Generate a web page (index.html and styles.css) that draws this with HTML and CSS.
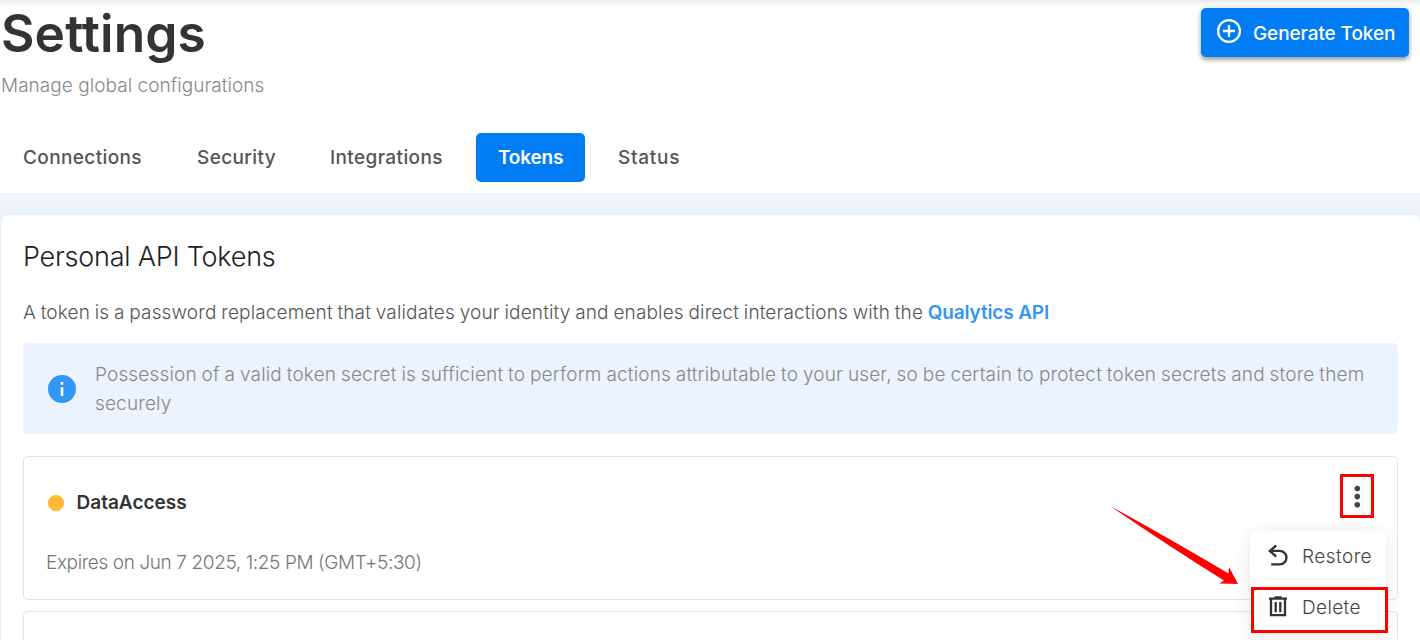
FILE: index.html
```
<!DOCTYPE html>
<html lang="en">
<head>
<meta charset="utf-8">
<title>Settings</title>
<link rel="stylesheet" href="styles.css">
</head>
<body>
<header class="page-header">
  <div class="title-row">
    <div>
      <h1 class="title"><span>Settings</span></h1>
      <p class="subtitle"><span>Manage global configurations</span></p>
    </div>
    <button class="generate">
      <svg class="plus-icon" viewBox="0 0 24 24"><circle cx="12" cy="12" r="10.9"/><path d="M12 6v12M6 12h12"/></svg>
      <span>Generate Token</span>
    </button>
  </div>
  <nav class="tabs">
    <a class="tab connections"><span>Connections</span></a>
    <a class="tab security"><span>Security</span></a>
    <a class="tab integrations"><span>Integrations</span></a>
    <a class="tab active"><span>Tokens</span></a>
    <a class="tab status"><span>Status</span></a>
  </nav>
</header>
<main class="panel">
  <h2 class="panel-title"><span>Personal API Tokens</span></h2>
  <p class="intro"><span>A token is a password replacement that validates your identity and enables direct interactions with the</span> <a class="link">Qualytics API</a></p>
  <div class="alert">
    <svg class="info-icon" viewBox="0 0 28 28"><circle cx="14" cy="14" r="14"/><path d="M12.7 7h2.6v2.7h-2.6zM12.7 12.3h2.6V21h-2.6z"/></svg>
    <p class="alert-text"><span>Possession of a valid token secret is sufficient to perform actions attributable to your user, so be certain to protect token secrets and store them</span><br><span>securely</span></p>
  </div>
  <section class="token">
    <div class="token-name"><i class="dot"></i><span>DataAccess</span></div>
    <p class="expires"><span>Expires on Jun 7 2025, 1:25 PM (GMT+5:30)</span></p>
    <div class="kebab"><svg viewBox="0 0 28 38"><circle cx="14.3" cy="11.5" r="2.8"/><circle cx="14.3" cy="19.6" r="2.8"/><circle cx="14.3" cy="27.8" r="2.8"/></svg></div>
    <svg class="arrow" viewBox="0 0 128 78"><path d="M0 0 Q50 27 118.500 67.500L119 61 128 78 109.500 77.500 114 74.500Q60 41 0 0z"/></svg>
    <div class="menu">
      <div class="menu-item restore">
        <svg viewBox="0 0 22 24"><path d="M9.200 1.500 2.800 6.900l6.400 5.700M3.100 6.900h9.600a6.700 6.700 0 0 1 0 13.500H4.200"/></svg>
        <span>Restore</span>
      </div>
      <div class="menu-item delete">
        <svg viewBox="0 0 22 24"><path d="M2 3.600h18M7.500 2.400h7M4 4v16.200h14V4M8.700 7v10.300M13.300 7v10.300"/></svg>
        <span>Delete</span>
      </div>
    </div>
  </section>
  <section class="token next"></section>
</main>
</body>
</html>
```
FILE: styles.css
```
* { box-sizing: border-box; }
body { margin: 0; height: 640px; overflow: hidden; background: #f0f5fa; font-family: Inter, "Open Sans", sans-serif; font-size: 19px; font-weight: 300; color: #666; white-space: nowrap; }
h1, h2, p { margin: 0; font-weight: inherit; }
.page-header { height: 193px; background: linear-gradient(#ebebeb 0, #f8f8f8 4px, #fff 9px); }
.title-row { display: flex; justify-content: space-between; align-items: flex-start; height: 133px; padding: 0 11px 0 1px; }
.title { padding-top: 3px; font-size: 51.500px; line-height: 60px; font-weight: 600; letter-spacing: .1px; color: #333; }
.subtitle { margin-top: 9px; line-height: 28px; letter-spacing: .04px; color: #888; }
.generate { display: flex; align-items: center; gap: 12px; width: 208px; height: 49px; margin-top: 8px; padding: 1px 0 0 16px; border: 0; border-radius: 5px; background: #007df5; color: #fff; font: 500 19px Inter, sans-serif; letter-spacing: -.1px; box-shadow: 0 3px 4px rgba(0,0,0,.32), 0 1px 6px rgba(0,0,0,.14); }
.generate span { padding-top: 1px; }
.plus-icon { width: 24px; height: 24px; margin-top: -4px; fill: none; stroke: #fff; stroke-width: 2.300; overflow: visible; flex: none; }
.tabs { display: flex; height: 49px; padding-left: 1px; gap: 11px; }
.tab { height: 49px; line-height: 50px; padding-left: 22px; font-weight: 500; letter-spacing: .38px; color: #555; }
.connections { width: 163px; }
.security { width: 122px; }
.integrations { width: 157px; }
.active { width: 109px; border-radius: 5px; background: #007df5; color: #fff; font-weight: 600; letter-spacing: -.2px; }
.status { letter-spacing: .75px; }
.panel { height: 425px; margin: 22px 0 0 1px; padding: 0 22px; border-radius: 8px 8px 0 0; background: #fff; box-shadow: 0 0 14px rgba(60,70,90,.06); }
.panel-title { padding-top: 23px; font-size: 27px; line-height: 38px; letter-spacing: -.22px; color: #222; }
.intro { margin-top: 23px; line-height: 28px; letter-spacing: .145px; word-spacing: -.75px; color: #555; }
.link { font-weight: 600; letter-spacing: -.15px; word-spacing: 0; color: #3296f5; }
.alert { display: flex; align-items: center; height: 91px; margin-top: 16px; padding-left: 25px; gap: 19px; border-radius: 5px; background: #ecf3fe; color: #888; }
.info-icon { width: 28px; height: 28px; flex: none; fill: #3296f5; }
.info-icon path { fill: #fff; }
.alert-text { line-height: 29px; letter-spacing: .15px; word-spacing: -.62px; }
.token { position: relative; width: 1375px; height: 144px; margin-top: 22px; padding: 31px 22px 0; border: 1px solid #e3e3e3; border-radius: 5px; }
.next { height: 29px; margin-top: 11px; padding: 0; border-bottom: 0; border-radius: 5px 5px 0 0; }
.token-name { display: flex; align-items: center; gap: 13px; padding-left: 1.500px; height: 29px; font-weight: 600; color: #333; }
.dot { width: 16px; height: 16px; border-radius: 50%; background: #ffb933; }
.expires { margin-top: 32px; line-height: 28px; letter-spacing: -.39px; color: #777; }
.kebab { position: absolute; left: 1316px; top: 17px; width: 34px; height: 44px; border: 3px solid #f00; }
.kebab svg { display: block; width: 28px; height: 38px; fill: #444; }
.arrow { position: absolute; left: 1086px; top: 49px; width: 128px; height: 78px; fill: #f00; overflow: visible; }
.menu { position: absolute; z-index: 2; left: 1226px; top: 74px; width: 136px; height: 102px; border-radius: 5px; background: #fff; box-shadow: 0 3px 18px rgba(0,0,0,.1); color: #444; }
.menu-item { display: flex; align-items: center; gap: 13px; padding-left: 17px; height: 50px; letter-spacing: .45px; }
.menu-item svg { width: 22px; height: 24px; flex: none; fill: none; stroke: #333; stroke-width: 2.300; }
.delete { width: 137px; height: 46px; margin: 6px 0 0 1px; padding: 0 0 6px 13px; border: 3px solid #f00; letter-spacing: .35px; }
```
